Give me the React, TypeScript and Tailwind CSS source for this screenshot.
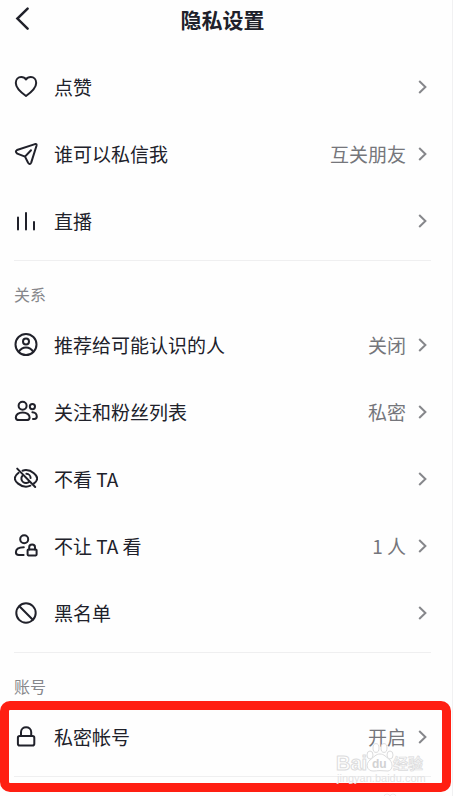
import type { ReactNode } from 'react';

type Item = {
  label: string;
  icon: ReactNode;
  value?: string;
};

const icons = {
  heart: (
    <path d="M12 21C8.5 18.5 1.8 13.4 1.8 8C1.8 4.5 4.2 2 7.2 2C9.2 2 11 2.9 12 4.4C13 2.9 14.8 2 16.8 2C19.8 2 22.2 4.5 22.2 8C22.2 13.4 15.5 18.5 12 21Z" />
  ),
  plane: (
    <path d="M3 8L21 2.1Q23 1.7 22.5 3.7L17.2 20.6Q15.8 23.4 14.1 20.8L11 14.6L3.3 11.6Q0.6 9.6 3 8ZM11 14.6L17 8.2" />
  ),
  bars: <path d="M4 8.5V20.5M12 4V20.5M20 13V20.5" />,
  person: (
    <>
      <circle cx="12" cy="11.5" r="10.5" />
      <circle cx="12" cy="8.5" r="3" />
      <path d="M4.8 18.7C6.8 15.2 9.2 14.4 12 14.4C14.8 14.4 17.2 15.2 19.2 18.7" />
    </>
  ),
  people: (
    <>
      <circle cx="8.6" cy="5.8" r="4" />
      <path d="M8.7 12.4C4.6 12.4 1.8 14.7 1.8 17.4C1.8 19.4 3 20.1 5 20.1H12.4C14.4 20.1 15.6 19.4 15.6 17.4C15.6 14.7 12.8 12.4 8.7 12.4Z" />
      <circle cx="18.4" cy="6.6" r="2.6" />
      <path d="M18.4 12.2C21.2 12.2 22.8 14.3 22.8 16.6C22.8 18.2 22 19 20.4 19H19" />
    </>
  ),
  eyeOff: (
    <>
      <path d="M3.2 1.6L21.2 20" />
      <path d="M8.6 3.7C9.7 3.3 10.8 3.1 12 3.1C18 3.1 23.2 8.5 23.2 11.4C23.2 12.8 22 14.8 20 16.4M16.4 18.7C15 19.3 13.5 19.7 12 19.7C6 19.7 0.8 14.3 0.8 11.4C0.8 9.8 2.3 7.5 4.6 5.8" />
      <path d="M8.7 8.4C7.6 9.6 7.2 10.8 7.4 12C7.8 14.6 10 16.2 12.4 16C13.6 15.9 14.5 15.5 15.2 14.8M12.4 6.8C14.8 6.9 16.6 8.8 16.6 11" />
    </>
  ),
  personLock: (
    <>
      <circle cx="10.2" cy="5.2" r="4" />
      <path d="M9.8 13.2C5 13.2 1.9 15.1 1.9 18.2C1.9 20.2 3 21 4.8 21H9.6" />
      <rect x="13.6" y="15.4" width="9" height="6" rx="0.8" />
      <path d="M15.2 15.4V13.2C15.2 9.6 21 9.6 21 13.2V15.4" />
    </>
  ),
  ban: (
    <>
      <circle cx="12" cy="12" r="9.7" />
      <path d="M5.4 5.2L18.8 18.8" />
    </>
  ),
  lock: (
    <>
      <rect x="3.9" y="11" width="16.4" height="9.6" rx="1.8" />
      <path d="M7 11V7C7 0.6 17.2 0.6 17.2 7V11" />
    </>
  ),
};

const general: Item[] = [
  { label: '点赞', icon: icons.heart },
  { label: '谁可以私信我', icon: icons.plane, value: '互关朋友' },
  { label: '直播', icon: icons.bars },
];

const relations: Item[] = [
  { label: '推荐给可能认识的人', icon: icons.person, value: '关闭' },
  { label: '关注和粉丝列表', icon: icons.people, value: '私密' },
  { label: '不看 TA', icon: icons.eyeOff },
  { label: '不让 TA 看', icon: icons.personLock, value: '1 人' },
  { label: '黑名单', icon: icons.ban },
];

function Row({ label, icon, value }: Item) {
  return (
    <button type="button" className="flex h-[67px] w-full items-center pr-1 text-left text-[19px] leading-7">
      <svg
        viewBox="0 0 24 24"
        className="mr-4 size-6 shrink-0"
        fill="none"
        stroke="currentColor"
        strokeWidth="2"
        strokeLinecap="round"
        strokeLinejoin="round"
      >
        {icon}
      </svg>
      <span className="flex-1">{label}</span>
      {value && <span className="mr-3 text-[#75767b]">{value}</span>}
      <svg viewBox="0 0 9 14" className="h-[14px] w-[9px] shrink-0" fill="none" stroke="#86878b" strokeWidth="2">
        <path d="M1.2 1L7.4 7L1.2 13" />
      </svg>
    </button>
  );
}

function SectionTitle({ children }: { children: ReactNode }) {
  return <h2 className="flex h-[50px] items-center pt-4 text-base leading-6 text-[#86878b]">{children}</h2>;
}

function Divider() {
  return <hr className="mt-[6px] border-[#efeff0]" />;
}

function Watermark() {
  return (
    <svg
      viewBox="0 0 98 56"
      className="pointer-events-none absolute top-[37px] right-0 h-14 w-[98px]"
      fill="#fff"
      stroke="#dcdcdd"
      strokeWidth="1"
      strokeLinejoin="round"
    >
      <g fontFamily="'Liberation Sans', 'Noto Sans CJK SC', sans-serif" fontWeight="700">
        <text x="3" y="30" fontSize="20">Bai</text>
        <ellipse cx="37" cy="15" rx="3" ry="4" />
        <ellipse cx="43" cy="8" rx="3" ry="4.4" />
        <ellipse cx="51" cy="8" rx="3" ry="4.4" />
        <ellipse cx="57" cy="15" rx="3" ry="4" />
        <path d="M47 14C43 14 41 17 37 20C32 24 34 31 40 31C43 31 44 30.6 47 30.6C50 30.6 52 31 55 31C60 30 60 24 57 20C53 17 51 14 47 14Z" />
        <text x="39" y="28" fontSize="12" fill="#d2d2d3" stroke="none">du</text>
        <text x="60" y="29" fontSize="15" fill="#f6f6f6" strokeWidth="0.7">经验</text>
      </g>
      <text x="4" y="42" fontSize="11" fill="#e2e2e3" stroke="none" fontFamily="'Liberation Sans', sans-serif">
        jingyan.baidu.com
      </text>
      <g strokeOpacity="0.5">
        <ellipse cx="54" cy="57" rx="3" ry="3" />
        <ellipse cx="60" cy="57" rx="3" ry="3" />
      </g>
    </svg>
  );
}

export default function App() {
  return (
    <main
      className="min-h-screen border-r border-[#f1f1f2] bg-[#fefefe] pr-[21px] pl-[14px] text-[#20212a]"
      style={{ fontFamily: "'Noto Sans CJK SC', sans-serif" }}
    >
      <header className="relative mb-4 flex h-[37px] items-center justify-center">
        <button type="button" aria-label="返回" className="absolute left-0 p-0">
          <svg viewBox="0 0 18 24" className="h-6 w-[18px]" fill="none" stroke="currentColor" strokeWidth="2.5" strokeLinecap="round">
            <path d="M13.6 1.6L3.4 11.6L13.6 21.6" />
          </svg>
        </button>
        <h1 className="text-[21px] leading-7 font-bold">隐私设置</h1>
      </header>

      <section>
        {general.map((item) => (
          <Row key={item.label} {...item} />
        ))}
        <Divider />
      </section>

      <section>
        <SectionTitle>关系</SectionTitle>
        {relations.map((item) => (
          <Row key={item.label} {...item} />
        ))}
        <Divider />
      </section>

      <section>
        <SectionTitle>账号</SectionTitle>
        <div className="relative">
          <Row label="私密帐号" icon={icons.lock} value="开启" />
          <Divider />
          {/* highlight frame */}
          <div className="pointer-events-none absolute -top-[2px] -right-5 -bottom-[15px] -left-[14px] rounded-[10px] border-[9px] border-[#ff1f12]" />
          <Watermark />
        </div>
      </section>
    </main>
  );
}
